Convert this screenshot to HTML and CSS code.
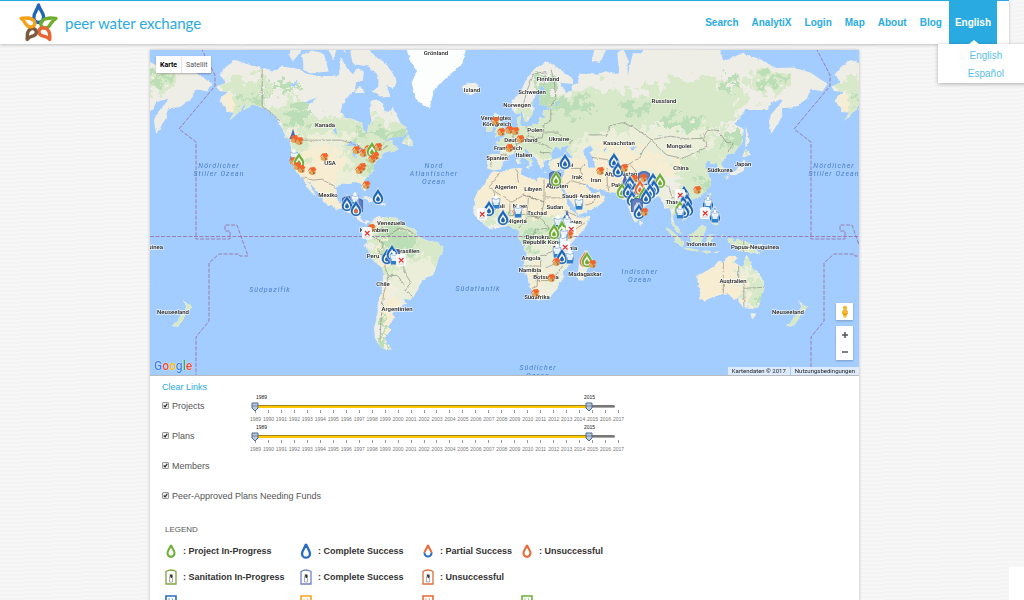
FILE: index.html
```html
<!DOCTYPE html>
<html lang="en">
<head>
<meta charset="utf-8">
<title>Peer Water Exchange</title>
<link rel="stylesheet" href="styles.css">
</head>
<body>
<svg class="sprite" aria-hidden="true">
  <defs>
    <symbol id="drop" viewBox="0 0 12 18"><path d="M6 1.2C5 5.5 1.5 8 1.5 12a4.5 4.5 0 0 0 9 0C10.5 8 7 5.500 6 1.200Z" fill="#fff" stroke="currentColor" stroke-width="2.700"/></symbol>
    <symbol id="split" viewBox="0 0 12 18"><path d="M1.500 11.500C1.800 8 5 5.500 6 1.200C7 5.500 10.200 8 10.500 11.500" fill="#fff" stroke="#e96a35" stroke-width="2.600"/><path d="M1.500 11a4.500 4.500 0 0 0 9 1V11" fill="#fff" stroke="#2a6cc0" stroke-width="2.600"/></symbol>
    <symbol id="toilet" viewBox="0 0 12 16"><path d="M1 15V2.500Q6 -.5 11 2.500V15Z" fill="#fff" stroke="currentColor" stroke-width="1.300"/><path d="M4.500 13V8Q6 4.500 7.500 8V13Z" fill="none" stroke="#999" stroke-width=".8"/><path d="M4.500 5.500h3v2.500L6 9.500Z" fill="#333"/></symbol>
    <symbol id="paper" viewBox="0 0 12 16"><path d="M1 1H11V15H1Z" fill="#fff" stroke="currentColor" stroke-width="1.600"/><path d="M4 3v4l3-1M7 3l1 3" fill="none" stroke="currentColor" stroke-width="1" opacity=".6"/></symbol>
    <symbol id="house" viewBox="0 0 10 10"><path d="M1.500 5 5 3.500 9 4.500V8L5.500 9.700 1.500 8Z" fill="#e0a45c"/><path d="M0 5.500 3 1 8 .5 10 4 5.500 6.200 3.500 3Z" fill="#f2652a"/><path d="M6.500 6.500V9l1.200-.6V6.200Z" fill="#8a4b26"/></symbol>
    <symbol id="marker" viewBox="0 0 14 19"><path d="M7 .5C6 5 1 8 1 12.500a6 6 0 0 0 12 0C13 8 8 5 7 .5Z" fill="currentColor" stroke="#fff" stroke-width=".7"/><path d="M7 6C6.500 8.500 3.500 10 3.500 12.800a3.500 3.500 0 0 0 7 0C10.500 10 7.500 8.500 7 6Z" fill="#fff"/><path d="M7 9C6.500 10.800 4.900 11.700 4.900 13.300a2.100 2.100 0 0 0 4.200 0C9.100 11.700 7.500 10.800 7 9Z" fill="currentColor"/></symbol>
    <symbol id="cup" viewBox="0 0 10 14"><path d="M1 3.500 9 3.500 8 13.500H2Z" fill="#fff" stroke="#fff"/><path d="M1.500 7.500H8.500L8 13H2Z" fill="#2b7fcb"/><path d="M2.500 5.500H7.500V10H2.500Z" fill="#e4effa"/><path d="M1 3.500Q5 5 9 3.500M1 3.500 2 13.500H8L9 3.500" fill="none" stroke="#5c8fc4" stroke-width=".7"/><circle cx="5" cy="2" r="1.700" fill="#fff"/></symbol>
    <symbol id="fail" viewBox="0 0 10 12"><rect width="10" height="12" rx="2" fill="#fff" opacity=".92"/><path d="M3 4 7.500 8.500M7.500 4 3 8.500" stroke="#e3342f" stroke-width="1.200"/><path d="M2 10h6" stroke="#ccc"/></symbol>
    <symbol id="frame" viewBox="0 0 12 14"><path d="M1 13V3Q6-1 11 3V13Z" fill="#6780bd" stroke="#4862a8"/><path d="M6 4C5 7 3 8 3 10a3 3 0 0 0 6 0C9 8 7 7 6 4Z" fill="#fff" opacity=".7"/></symbol>
    <symbol id="spike" viewBox="0 0 8 11"><path d="M4 0Q5 5 8 11H0Q3 5 4 0Z" fill="#5069b0"/></symbol>
  </defs>
</svg>

<header class="header">
  <a class="brand" href="#">
    <svg class="brand-mark" viewBox="0 0 40 40" fill="none" stroke-width="3.300" stroke-linejoin="round" aria-hidden="true">
      <path d="M20 3C19 8 15.500 10 15.500 15a4.500 4.500 0 0 0 4.500 5C24 20 25 17 25 14C24.500 10 21 7 20 3Z" stroke="#1f66b6"/>
      <path d="M37 16C32 15.500 28 15 24 18Q21 21 23 24Q27 27 30 24C32.500 21 33 18 37 16Z" stroke="#6cae2b"/>
      <path d="M31 36.500C31 32 31.500 28 27 25.500Q22 24 20.500 28Q20 32 24 33C27 34 29 34 31 36.500Z" stroke="#ea6430"/>
      <path d="M9 36.500C9 32 8.500 28 13 26Q17 25 18 29Q18 32 15 33C12 34 11 34 9 36.500Z" stroke="#7d5a3e"/>
      <path d="M3 16C8 15.500 12 14.500 15.500 18Q18 22 14 24Q10 25 8 22C6.500 20 6 18 3 16Z" stroke="#f6a11a"/>
    </svg>
    <span>peer water exchange</span>
  </a>
  <nav class="nav">
    <a href="#">Search</a>
    <a href="#">AnalytiX</a>
    <a href="#">Login</a>
    <a href="#">Map</a>
    <a href="#">About</a>
    <a href="#">Blog</a>
    <div class="nav-lang">
      <a class="active" href="#">English</a>
      <div class="menu">
        <a href="#">English</a>
        <a href="#">Español</a>
      </div>
    </div>
  </nav>
</header>

<main class="panel">
  <div class="map">
    <svg class="map-canvas" viewBox="150 50 709 325" role="img" aria-label="World map of projects">
      <defs>
        <filter id="coast" x="0" y="0" width="100%" height="100%"><feTurbulence type="fractalNoise" baseFrequency=".25" numOctaves="2" seed="4"/><feDisplacementMap in="SourceGraphic" scale="3" xChannelSelector="R" yChannelSelector="G"/></filter>
        <filter id="cover" x="-20%" y="-20%" width="140%" height="140%"><feTurbulence type="fractalNoise" baseFrequency=".12" numOctaves="4" seed="9"/><feDisplacementMap in="SourceGraphic" scale="34" xChannelSelector="R" yChannelSelector="G"/><feGaussianBlur stdDeviation=".6"/></filter>
        <clipPath id="landclip"><path id="clip-shape"/></clipPath>
        <g id="world">
          <path id="land" fill="#efeee6"/>
          <g clip-path="url(#landclip)"><g id="regions" filter="url(#cover)"></g></g>
          <path id="ice" fill="#fcfdfd"/>
          <path id="lakes" fill="#a3ccff"/>
          <path id="borders" fill="none" stroke="#80807a" stroke-width=".6"/>
        </g>
        <g id="dateline" fill="none" stroke="#9a76a5" stroke-width=".9" stroke-dasharray="4 1.500">
          <path d="M201 48 215 75V86L179 129 196 142V239H230V231H225V225H237L248 256H240L239 254H219L209 263V321L196 337V376"/>
        </g>
      </defs>
      <rect x="150" y="50" width="709" height="325" fill="#a3ccff"/>
      <g filter="url(#coast)">
        <use href="#world"/><use href="#world" x="615"/><use href="#world" x="-615"/>
      </g>
      <use href="#dateline"/><use href="#dateline" x="615"/>
      <path d="M150 236.500H859" stroke="#9a76a5" stroke-width=".9" stroke-dasharray="4 1.500"/>
      <g class="place" id="places"></g>
      <g class="ocean" id="oceans"></g>
      <g id="markers"></g>
    </svg>
    <div class="map-type"><button type="button" class="on">Karte</button><button type="button">Satellit</button></div>
    <div class="map-tools">
      <button type="button" class="pegman" aria-label="Street View"><svg viewBox="0 0 10 14"><circle cx="5" cy="3" r="2.300" fill="#f9b72a"/><path d="M2 6H8L8.500 10H7L6.600 13.500H3.400L3 10H1.500Z" fill="#f9b72a"/><path d="M3 5.500H7M3 10H7" stroke="#c98208" stroke-width=".8"/></svg></button>
      <div class="zoom">
        <button type="button" aria-label="Zoom in"><svg viewBox="0 0 8 8"><path d="M4 1V7M1 4H7" stroke="#555" stroke-width="1.500"/></svg></button>
        <button type="button" aria-label="Zoom out"><svg viewBox="0 0 8 8"><path d="M1 4H7" stroke="#555" stroke-width="1.500"/></svg></button>
      </div>
    </div>
    <div class="google" aria-label="Google"><span class="b">G</span><span class="r">o</span><span class="y">o</span><span class="b">g</span><span class="g">l</span><span class="r">e</span></div>
    <div class="credits"><span>Kartendaten © 2017</span><a href="#">Nutzungsbedingungen</a></div>
  </div>

  <form class="filters">
    <a class="clear" href="#">Clear Links</a>
    <div class="row"><label><input type="checkbox" checked> Projects</label><div class="range" data-name="Projects"></div></div>
    <div class="row"><label><input type="checkbox" checked> Plans</label><div class="range" data-name="Plans"></div></div>
    <div class="row"><label><input type="checkbox" checked> Members</label></div>
    <div class="row"><label><input type="checkbox" checked> Peer-Approved Plans Needing Funds</label></div>
  </form>

  <section class="legend">
    <h2>LEGEND</h2>
    <div class="keys">
      <div class="green"><svg><use href="#drop"/></svg>: Project In-Progress</div>
      <div class="blue big"><svg><use href="#drop"/></svg>: Complete Success</div>
      <div><svg><use href="#split"/></svg>: Partial Success</div>
      <div class="orange"><svg><use href="#drop"/></svg>: Unsuccessful</div>
      <div class="olive big"><svg><use href="#toilet"/></svg>: Sanitation In-Progress</div>
      <div class="violet big"><svg><use href="#toilet"/></svg>: Complete Success</div>
      <div class="rust big"><svg><use href="#toilet"/></svg>: Unsuccessful</div>
      <div></div>
      <div class="blue big"><svg><use href="#paper"/></svg></div>
      <div class="amber big"><svg><use href="#paper"/></svg></div>
      <div class="orange big"><svg><use href="#paper"/></svg></div>
      <div class="green big"><svg><use href="#paper"/></svg></div>
    </div>
  </section>
</main>
<div class="corner"></div>
<script src="map.js"></script>
</body>
</html>
```
FILE: styles.css
```css
* { box-sizing: border-box; }
body {
  margin: 0;
  height: 100vh;
  overflow: hidden;
  padding-right: 15px;
  font-family: "Liberation Sans", Arial, sans-serif;
  font-size: 9px;
  color: #555;
  background: repeating-linear-gradient(178deg, #f7f7f7 0 2px, #f4f4f4 2px 4px);
}
a { color: #29abe2; text-decoration: none; }
button { border: 0; padding: 0; background: #fff; font: inherit; display: grid; place-items: center; }
.sprite { position: absolute; width: 0; height: 0; }

.header {
  position: relative;
  z-index: 2;
  display: flex;
  justify-content: space-between;
  height: 44px;
  padding: 0 12px 0 18px;
  background: #fff;
  border-top: 1px solid #29abe2;
  box-shadow: 0 1px 3px rgba(0, 0, 0, .22);
}
.brand { display: flex; align-items: center; gap: 6px; font: 15px Lato, sans-serif; }
.brand-mark { width: 41px; height: 41px; }
.nav { display: flex; gap: 1px; font-size: 10px; font-weight: bold; }
.nav > a, .nav .active { display: flex; align-items: center; height: 43px; padding: 0 6px; }
.nav-lang { position: relative; }
.nav .active { background: #29abe2; color: #fff; }
.menu {
  position: absolute;
  top: 43px;
  left: -11px;
  width: 96px;
  padding: 3px 0 0;
  background: #fff;
  box-shadow: 0 1px 4px rgba(0, 0, 0, .3);
  font-weight: normal;
  text-align: center;
  line-height: 18px;
}
.menu a { display: block; color: #5bbfe8; }
.menu::before {
  content: "";
  position: absolute;
  left: 31px;
  top: -4px;
  border: 5px solid transparent;
  border-top: 0;
  border-bottom: 4px solid #fff;
}

.panel {
  max-width: 709px;
  min-height: calc(100vh - 50px);
  margin: 6px auto 0;
  background: #fff;
  box-shadow: 0 0 3px rgba(0, 0, 0, .25);
}
.map { position: relative; border-bottom: 1px solid #b9bcc2; font-family: Roboto, sans-serif; }
.map-canvas { display: block; width: 100%; height: auto; }
.place { font-size: 6px; font-weight: 500; fill: #222; stroke: #fff; stroke-width: 1.5px; stroke-opacity: .7; paint-order: stroke; text-anchor: middle; }
.ocean { font-size: 7px; font-style: italic; letter-spacing: 1px; fill: #4c80c6; text-anchor: middle; }
.map-type {
  position: absolute;
  left: 6px;
  top: 6px;
  display: flex;
  height: 17px;
  background: #fff;
  box-shadow: 0 1px 2px rgba(0, 0, 0, .3);
  border-radius: 1px;
  font-size: 7px;
}
.map-type button { padding: 0 4px; color: #555; }
.map-type .on { color: #000; font-weight: bold; border-right: 1px solid #e6e6e6; }
.map-tools { position: absolute; right: 6px; bottom: 15px; width: 17px; display: grid; gap: 6px; }
.map-tools button { width: 17px; height: 17px; box-shadow: 0 1px 2px rgba(0, 0, 0, .25); }
.pegman svg { width: 10px; height: 13px; }
.zoom svg { width: 8px; height: 8px; }
.google { position: absolute; left: 4px; bottom: 1px; font: 500 12px/16px Roboto, sans-serif; }
.google span { text-shadow: 0 0 1px #fff, 0 0 1px #fff; }
.google .b { color: #3b7ded; }
.google .r { color: #e8453c; }
.google .y { color: #f5b400; }
.google .g { color: #35a853; }
.credits { position: absolute; right: 0; bottom: 0; display: flex; gap: 1px; font-size: 6px; line-height: 8px; }
.credits > * { padding: 0 4px; background: rgba(240, 245, 252, .75); color: #222; }

.filters { padding: 5px 12px 0; }
.clear { display: block; height: 19px; line-height: 12px; }
.row { display: flex; height: 30px; }
label { display: flex; align-items: center; gap: 3px; height: 11px; min-width: 87px; white-space: nowrap; }
input[type="checkbox"] {
  appearance: none;
  width: 7px;
  height: 7px;
  margin: 0;
  border: 1px solid #999;
  border-radius: 1px;
  background: #eee;
}
input[type="checkbox"]:checked {
  background: url("data:image/svg+xml,%3Csvg xmlns='http://www.w3.org/2000/svg' viewBox='0 0 7 7'%3E%3Cpath d='M1 3.500 3 5.500 6 1' fill='none' stroke='%23222' stroke-width='1.600'/%3E%3C/svg%3E") #eee;
}
.range { position: relative; width: 376px; height: 25px; margin-top: -6px; }
.values { display: flex; justify-content: space-between; width: 339px; margin-left: 7px; font-size: 5px; line-height: 6px; color: #222; padding-bottom: 5px; }
.bar { height: 3px; margin: 0 10px 2px 4px; border-radius: 2px; background: linear-gradient(#777 50%, #aaa 50%); }
.fill { width: 92%; height: 3px; background: linear-gradient(#a08420 34%, #ffc800 34%); }
.range input {
  position: absolute;
  left: 1px;
  top: 8px;
  width: 370px;
  height: 10px;
  margin: 0;
  appearance: none;
  background: none;
  pointer-events: none;
}
.range input::-webkit-slider-thumb {
  appearance: none;
  width: 10px;
  height: 10px;
  background: url("data:image/svg+xml,%3Csvg xmlns='http://www.w3.org/2000/svg' viewBox='0 0 10 10'%3E%3Cpath d='M2 1H8V6L5 9 2 6Z' fill='%23b9cbdd' stroke='%2350688a'/%3E%3Cpath d='M2 4H8' stroke='%2350688a' stroke-width='.700'/%3E%3C/svg%3E");
  pointer-events: auto;
}
.years { display: grid; grid-template-columns: repeat(29, 1fr); font-size: 5px; line-height: 6px; color: #777; text-align: center; }
.years span::before { content: ""; display: block; width: 1px; height: 3px; margin: 0 auto 3px; background: #999; }

.legend { padding: 5px 15px 0; }
h2 { margin: 0 0 5px; font-size: 8px; line-height: 10px; font-weight: normal; }
.keys { display: grid; grid-template-columns: 135px 122px 99px 1fr; grid-auto-rows: 26px; font-weight: bold; }
.keys > div { display: flex; align-items: center; gap: 6px; height: 21px; white-space: nowrap; -webkit-text-fill-color: #333; }
.keys svg { width: 12px; height: 14px; }
.keys .big svg { height: 16px; }
.green { color: #6eb03a; }
.blue { color: #2a6cc0; }
.orange { color: #e96a35; }
.olive { color: #7fa43c; }
.violet { color: #6f82c8; }
.rust { color: #d9703c; }
.amber { color: #f5a21c; }
.corner { position: fixed; right: 0; bottom: 0; width: 15px; height: 33px; background: #fff; }
```
FILE: map.js
```js
// Coastlines as "lon,lat" lists, drawn in a Mercator projection.
const SCALE = 97.9;
const project = (lon, lat) => {
  const y = Math.log(Math.tan(Math.PI / 4 + lat * Math.PI / 360));
  return [(503 + lon * 1.708).toFixed(1), (236.5 - SCALE * y).toFixed(1)];
};
const trace = (text, close) => 'M' + text.trim().split(/\s+/).map(p => project(...p.split(',').map(Number)).join(' ')).join('L') + (close ? 'Z' : '');
const shape = (list, close = true) => list.map(t => trace(t, close)).join('');
const by = id => document.getElementById(id);

const land = [
  '-168,65.6 -162,66.5 -166,68.3 -162,70 -156.5,71.3 -150,70.5 -141,69.7 -135,69 -130,70 -125,69.8 -120,69.5 -115,68.5 -108,68 -101,68 -96,68.2 -95,71.8 -91,69.5 -88,68.5 -85,69.7 -81.5,69 -82,67 -86,66.3 -87,64.5 -92,62.5 -94.5,60 -94.5,58.8 -92.5,57 -88,56.5 -82.3,55.1 -82,53 -79.5,51.4 -79,54 -76.8,56 -78,58.5 -77.5,62 -73.5,62.3 -70,61 -69.5,59 -66,58.7 -64.5,60.3 -62,57.5 -60,55.2 -56,53 -55.8,52 -59,50.2 -66,50.1 -71,47 -68,48.5 -65,49.2 -64.5,47 -61,45.6 -65.5,43.6 -66,45 -70,43.7 -70.7,42 -74,40.6 -75.5,38 -76,35.2 -79,33.5 -81.3,31 -80.2,27 -80.5,25.2 -82,27 -83,29.5 -86,30.3 -90,29.3 -94,29.6 -97.2,27.7 -97.7,23 -96,19 -92,18.6 -90.5,21 -87,21.4 -88,18.5 -88.5,15.9 -84,15.8 -83.3,14 -83.7,11 -82,9 -79.5,9.6 -77.5,8.5 -78.5,8.3 -80,7.5 -83,8.3 -85.7,10 -87.5,13 -91.5,14 -94.5,16.2 -98,16.2 -102,18 -105.5,20 -105.5,22.5 -109,25.7 -112.5,29.5 -114.8,31.7 -112.5,28 -109.5,23 -112,25 -115,28 -117,32.5 -120.5,34.5 -122.5,37.5 -124.3,40.3 -124,46 -124.7,48.4 -123,49 -127.5,51 -130.5,54.5 -133.5,57.5 -139.5,59.7 -146,60.8 -149,60 -152,59.2 -151,61.3 -154,59 -158,57 -163,54.8 -160,56.2 -157.5,58.5 -162,58.7 -162,60 -166,61.7 -164.5,63 -161,64.3 -166,64.5',
  '-90,73.8 -80,73.7 -75,72 -68,70.5 -62,67 -64,65 -68,66 -66,63 -71,62.8 -77,64.5 -73,65.5 -73,68 -79,70 -88,70.5',
  '-117,71 -117,69.5 -113,68.6 -102,69 -105,72.5 -112,73 -118,72.3', '-125,72 -123,71 -118,73 -124,74', '-87,64 -81,64 -84,66', '-102,73 -99,71.3 -97,73.8 -92,72.5 -92,74 -102,74',
  '-59.3,47.7 -53,46.7 -53,48.5 -56,51.5', '-84.8,22 -80,23 -75,20.7 -74.2,20 -77.5,19.9 -82,22.4', '-74,18.3 -73,19.9 -68.5,18.6 -71,17.9', '-128,50.7 -123.5,48.3 -125,50',
  '-24,65.5 -22,66.3 -16,66.5 -13.6,65 -18.5,63.4 -22.5,63.9',
  '-77.5,8.5 -75.5,10.7 -72,12 -71.5,10.8 -68,11.5 -62,10.7 -60,8.5 -57,6 -51.5,4.3 -50,0 -44,-2.5 -39,-3.5 -35.2,-5.5 -35,-8.5 -37.5,-12 -39,-17 -41,-22 -46,-24 -48.7,-27 -52,-33 -54,-34.7 -58,-34.2 -57,-36.5 -62,-39 -65,-41 -63.7,-42.5 -65.5,-45 -67.5,-46.2 -65.8,-47.8 -69,-51 -68.5,-52.5 -65.2,-54.8 -69,-55.3 -72,-54 -75,-51 -75.5,-47 -73.5,-42 -73.5,-37 -71.5,-32 -70.3,-25 -70.3,-18.3 -76,-14 -79,-8 -81.3,-5 -80,-3 -80.8,-1 -78.8,1.5 -77.3,4 -77.8,7',
  '-6,35.8 -2,35.2 5,36.8 11,37.2 10.2,34.2 15,32.3 20,30.9 20,32.5 23,32.5 29,31 34,31.2 32.6,29.8 35.5,24 37.3,21 37.5,18.6 39.5,15.5 43.2,12.4 43.5,11.3 51.2,11.8 48,5 42.5,-1 39.3,-5 40.6,-11 40.5,-15 35,-20 35.4,-24 32.7,-26 32,-29 28,-33 25.5,-34 20,-34.8 18.4,-34 18.2,-32 15,-27 14.4,-22.5 11.8,-17 13.8,-11 12.3,-6 9,-1 9.5,4 6,4.3 3.5,6.4 -3,5 -7.5,4.4 -13,8.5 -16.8,12.5 -17.4,14.7 -16.3,19 -17,21 -14.5,26 -10,29.5 -9.7,31.5',
  '49.3,-12 50.4,-15.5 47.2,-25 44.2,-25 43.5,-22 44.5,-16.2',
  '-9,37 -9.3,39 -8.8,43.2 -1.8,43.4 -1.2,46 -4.7,48.4 -1.5,48.7 -1.5,49.7 1.6,50.9 4,52 5,53.3 8.5,53.8 8.1,56.8 10.6,57.7 10,55 12,54.2 14,53.9 18.5,54.8 21,55.3 21.2,57 24,57 23.5,59.2 30,59.9 25,60.2 21.5,61 21.3,63 25.3,65 22,65.8 17.5,62 17,60.8 18.5,60 16.5,57 14,55.5 12.8,55.5 11,59 8,58 5.5,59 5,62 10,64 14.5,68 20,70 26,71 31,70 41,67.5 41,66.2 33.5,66.5 37,64 40.5,64.7 40,66 44,66.3 44,68.5 54,68.5 61,69 68,68.5 67,72.5 70,73.5 73,71.5 73,68 76,72.5 81,72.5 87,75 98,76 113,74 113.5,73.5 127,73.3 129,71 140,72.5 150,71.5 160,69.7 170,69.8 180,68.8 190,66.2 187,64.4 180,65 178,62.5 170.5,60 164,59.9 162.5,56.5 157,51.2 155.7,56 157,58 163,61.5 164,62.5 157,61.5 155,59.3 142,59.3 135.5,54.8 141,53 140.3,48.5 135.5,44 131,43 130,41 127.5,39.5 129.4,37 129,35.2 126.5,34.5 126,37.5 124.8,39.6 121.5,39 121.5,40.8 118,39 119,37.2 122.3,37 119.5,35 121.8,31.5 121.5,28.5 119,25.5 114.5,22.4 110,21 108,21.6 106,19 109,13 108,11 105,8.7 105,10.5 102.5,12.2 101,13.4 99.5,11 100.5,7 103.4,4 104,1.4 101.3,3 100.3,6 98.3,8 98.6,13 97.5,16.5 94.3,16 94,19 91.8,22.5 88,21.7 86.5,20 82.3,16.5 80.2,15 80,12 79.8,10.3 77.5,8 76.3,10 74.5,14 72.8,19 72.6,21.3 70,21 69,22.5 67,24.8 61.5,25.2 57,26.8 54,26.6 51,28 48.5,30 48,29.5 50.2,26.6 51.5,25 51.8,24 54,24.2 56.3,26 57,24 59.8,22.5 57.7,19 55,17.2 52,15.7 45,12.8 43.3,12.8 42.5,16.5 39,21.2 35,28 34.5,29.5 34.3,31.3 36,35 36,36.7 32,36.2 27.5,36.8 26.5,39 29,41 35,42 41.5,41.6 37,45 39,47.2 35,46.3 34,44.5 32.5,45.5 33,46.2 30.5,46.3 28,43.5 28.5,41.3 26,40.8 23.5,40.5 24,38 22.5,36.6 21,38.5 19.5,41.5 15,44.3 13.6,45.5 12.3,45.3 14,42.3 18.5,40.2 16.8,40.4 16.5,38.2 15.7,38 15.5,40 12,42 8.8,44.4 5,43.3 3.2,42.8 3,41.9 0,40 -0.5,38 -2,36.7 -5.5,36',
  '-5.5,50.1 1.4,51.2 1.5,52.8 -1.5,55 -2,57.6 -5,58.6 -5.8,56 -3,54 -4.5,52.8 -5,51.8 -3,51.3', '-10,52 -6.3,52.3 -6,55 -9.5,54', '12.5,38 15.5,38.2 15,36.8', '8.3,39 9.7,39.3 9.5,43 8.3,41', '24,35.4 26,35.1 24,35', '32.5,35 34.5,35.6 33,34.6',
  '52,71 57,70.7 60,73 68,76.5 55,75', '142,54 144.5,49 142,46', '140,42 141.8,45.4 145.3,43.3 141,42', '141,41.3 142,39.5 140.8,35.7 136,33.7 131,34 136,35.8 139.5,38.5', '130,33.5 132,33.5 131,31.2', '120.2,23 121.8,25.2 121,22', '108.7,19.5 111,20 109.5,18.3',
  '120.5,18.5 122,18.3 121.6,14 124,12.7 120.2,14', '122,7.5 125.5,9.8 126.3,6.5 125,6', '123,11 125,12 125,10.3', '80,9.5 81.8,7.5 80.5,6 79.8,7',
  '95.3,5.6 98,4 103.5,-1 106,-3 105.8,-5.8 102,-4 98.5,1', '105.3,-6.6 108,-6.7 114.5,-7.8 114,-8.7 108,-7.8', '109,1.5 111,1.5 116.5,7 119,5 117.5,1 116,-4 110.2,-2.9', '120,0.8 125,1.5 120.5,0.3 123,-1 121.5,-2 122.5,-5 120.5,-3 120.3,-5.5 119,-3', '116,-8.5 120,-8.3 122,-8.5 119,-9.8', '124,-10 127,-8.5 124,-9.2', '128,0 129,1.5 128.5,-1',
  '131,-0.8 134,-0.8 135,-3.3 138,-1.7 144.5,-3.8 148,-6 147,-6.8 150.8,-10.4 147,-9.5 143,-9 138,-8.3 138,-5.8 133,-4 132,-2.8', '148.5,-5.5 152,-4 151,-6',
  '114,-22 114,-26 115.7,-32 115,-34.3 118,-35 124,-33 129,-31.7 131.5,-31.5 135.5,-34.8 137.8,-32.7 138,-35.5 140,-38 143.5,-38.8 146.3,-39 150,-37.5 151.2,-33.5 153.3,-28.5 152.5,-25 149,-20.5 146,-18.8 145.2,-15 142.5,-10.8 141.5,-13.5 140.8,-17.5 139,-17.3 135.5,-15 136.8,-12.2 132.5,-11.2 130.7,-12.6 129.5,-15 126.5,-14 123.7,-17 122,-18.2 118.5,-20.3',
  '144.7,-40.8 148.3,-41 147,-43.5 145.5,-42.5', '172.8,-34.5 175.5,-36.8 178.5,-37.7 177,-39.5 175.3,-41.6 173.8,-39.3 174.7,-38', '172.7,-40.6 174.2,-41.5 172.8,-43.8 170.7,-45.8 168.5,-46.6 166.5,-46 170,-43.2'
];
const ice = ['-66,78 -60,76 -54,71 -50.5,69 -53.5,66.5 -51,62.5 -46,60.3 -43,60 -40,65 -32,68 -24,70.5 -20,75 -20,80 -66,80'];
const lakes = ['47,45 51,47 53,45 50.5,44 53,41.5 54,37.3 50,37.5 49.5,40.5 47.5,43', '-92,46.8 -88,48.7 -84.5,46.5', '-87.5,45.5 -86,45.5 -86.5,41.8 -88,42', '-84,46 -80,45 -82.5,43', '-83,41.6 -79,43 -81,42', '-79.5,43.5 -76.5,44 -79,43.2', '32,0 34,0 33,-2.5', '104,51.5 109.5,55.5 105,52', '58.5,45 61,46.5 60,44', '-125,66 -120,67 -122,65.5', '-116,61.5 -109,62.8 -113,61', '-99,52 -97,51 -98,54', '30,61 33,61.5 31,60', '74,46 79,46.5 75,45'];
const borders = [
  '-123,49 -95,49 -89,48 -83,46 -79,43.3 -75,45 -71,45.2 -67,47', '-141,69.7 -141,60.3 -137,59 -130,55.5', '-117,32.5 -111,31.3 -106,31.8 -101,29.5 -97.2,26',
  '50,51 55,51 61,51 62,54 70,55.3 77,53.5 87,49.2 98,50.5 107,49.5 117,49.7 120,53 126,52.5 131,48 135,48.2 131,43', '87,49.2 91,46 96,43 105,41.5 112,43.7 120,46.5 117,49.7', '87,49.2 82,45 80,42 74,39 78,35.5', '52,42 56,41.5 61,41 67,37.5 74,39', '61,37 61,30 62,25.3', '67,25 70,28 74,31 74,34 78,35.5', '78,35 81,30.5 88,27.8 97,28.5 99,22 105,23 108,21.6',
  '28,69.5 30,67 31,62.5 28,60.5', '12,61 14,64.5 18,68.5 25,69', '25,69 24,66', '23,54 28,56 28,59.5', '24,52 32,52 35,50 40,49 39,47.5', '14,54 15,51 19,49.5 23,50 24,54', '6,53 6,49.5 8,47.5 14,49 15,51', '8,47.5 7,44', '17,48 22,48 29,45.3', '22,44 28,44', '-7,42 -7,37.5', '-1.5,43.3 3,42.5',
  '-8,28 -5,31 -2,35', '-8,27.5 5,19.5 12,23.5 24,20 24,31.5', '9,30 8,37', '12,23.5 15,23 24,19.5', '25,22 36,22', '-12,15 -5,15.5 -5,25', '4,19 4,12 14,13', '9,4.5 15,12 22,11 27,5 19,4 17,-1 12,-5', '15,23 14,13 22,11 24,19.5', '34,4 31,4 30,-4 30,-8 24,-11 22,-11 22,-17 12,-17', '34,5 42,4 48,8', '20,-18 20,-28 17,-29', '20,-25 26,-25 31,-22 35,-17', '25,-18 30,-16 33,-10 40,-11', '36,15 43,12',
  '-77,1 -70,-4 -73,-10 -69,-11 -69,-18', '-72,7 -67,1 -60,5 -52,2', '-69,-11 -65,-10 -58,-16 -58,-20 -54,-26 -57.5,-30 -53,-33', '-69,-18 -67,-23 -70,-32 -71.5,-45 -72,-52', '-67,-22.5 -62,-22 -58,-27',
  '35,28 40,31 48,29', '37,37 45,37 47,31', '45,37 48,39', '43,16.5 52,19 56,24', '129,-15 129,-31.5', '138,-17 138,-26 141,-26 141,-38', '141,-29 153,-28.5', '129,-26 138,-26', '141,-3 141,-9'
];
by('land').setAttribute('d', shape(land));
by('clip-shape').setAttribute('d', shape(land));
by('ice').setAttribute('d', shape(ice));
by('lakes').setAttribute('d', shape(lakes));
by('borders').setAttribute('d', shape(borders, false));

// Vegetation and desert patches: colour, centre x, centre y, radius x, radius y.
const GREEN = '#d8e9c9', DEEP = '#bcdeb6', SAND = '#f6edd2', PALE = '#ebeed9', ROCK = '#efeee6';
const regions = [
  [PALE, 330, 160, 75, 40], [SAND, 318, 165, 25, 22], [SAND, 330, 200, 22, 14], [GREEN, 375, 155, 30, 26], [GREEN, 265, 108, 40, 18], [GREEN, 340, 125, 55, 9], [GREEN, 400, 130, 30, 10], [DEEP, 250, 92, 18, 8], [DEEP, 297, 116, 12, 12], [DEEP, 382, 132, 26, 4], [DEEP, 285, 86, 14, 4], [GREEN, 245, 85, 26, 10], [SAND, 225, 105, 9, 8], [GREEN, 300, 145, 8, 14], [DEEP, 375, 165, 12, 5], [ROCK, 275, 98, 14, 7],
  [GREEN, 409, 245, 42, 38], [DEEP, 395, 240, 20, 16], [PALE, 415, 280, 24, 24], [SAND, 388, 318, 10, 28], [SAND, 378, 262, 4, 26], [DEEP, 382, 335, 3, 24],
  [PALE, 545, 175, 80, 60], [SAND, 530, 190, 60, 26], [SAND, 590, 180, 40, 26], [GREEN, 535, 232, 34, 18], [DEEP, 530, 236, 16, 8], [PALE, 545, 268, 26, 24], [SAND, 536, 282, 8, 18], [SAND, 577, 222, 9, 15], [GREEN, 494, 218, 18, 5], [GREEN, 588, 270, 5, 10],
  [GREEN, 540, 135, 60, 23], [PALE, 500, 158, 22, 10], [GREEN, 600, 110, 65, 22], [DEEP, 570, 105, 20, 9], [DEEP, 543, 92, 9, 18], [GREEN, 690, 104, 50, 28], [GREEN, 768, 80, 22, 12], [DEEP, 768, 80, 12, 7], [DEEP, 727, 83, 6, 8], [DEEP, 680, 122, 26, 6], [DEEP, 635, 108, 12, 6], [GREEN, 735, 95, 14, 10],
  [PALE, 660, 145, 90, 18], [SAND, 652, 168, 30, 13], [SAND, 620, 160, 35, 14], [GREEN, 700, 175, 24, 26], [DEEP, 705, 186, 12, 7], [GREEN, 725, 145, 18, 16], [DEEP, 733, 138, 10, 8], [PALE, 640, 195, 24, 25], [GREEN, 690, 205, 20, 25], [GREEN, 700, 236, 45, 20], [GREEN, 750, 247, 24, 12],
  [SAND, 725, 278, 40, 28], [PALE, 752, 278, 14, 26], [GREEN, 756, 295, 10, 16], [GREEN, 745, 262, 6, 12], [DEEP, 758, 300, 4, 6], [GREEN, 797, 313, 12, 18]
];
by('regions').innerHTML = regions.map(([c, x, y, rx, ry]) => `<ellipse cx="${x + 1}" cy="${y + 1}" rx="${rx}" ry="${ry}" fill="${c}"/>`).join('');

const label = ([t, x, y]) => `<text x="${x}" y="${y}">${t}</text>`;
by('places').innerHTML = [
  ['Grönland', 436, 55], ['Island', 472, 92], ['Finnland', 548, 81], ['Schweden', 532, 94], ['Norwegen', 517, 107], ['Vereinigtes', 496, 120], ['Königreich', 497, 126], ['Polen', 535, 132], ['Deutschland', 521, 142], ['Ukraine', 559, 141], ['Frankreich', 508, 150], ['Italien', 524, 157], ['Spanien', 497, 160], ['Russland', 664, 103], ['Kasachstan', 619, 145], ['Mongolei', 679, 148], ['China', 681, 170], ['Südkorea', 720, 172], ['Japan', 743, 166], ['Kanada', 325, 127], ['USA', 330, 165], ['Mexiko', 328, 197], ['Algerien', 506, 189], ['Libyen', 533, 191], ['Ägypten', 557, 188], ['Türkei', 565, 167], ['Irak', 577, 179], ['Iran', 596, 182], ['Afghanistan', 621, 176], ['Pakistan', 623, 187], ['Saudi-Arabien', 581, 198], ['Mali', 499, 208], ['Niger', 520, 208], ['Sudan', 555, 209], ['Tschad', 537, 215], ['Nigeria', 517, 223], ['Äthiopien', 569, 224], ['Demokratische', 546, 239], ['Republik Kongo', 544, 244], ['Angola', 531, 260], ['Namibia', 530, 272], ['Botsuana', 546, 279], ['Südafrika', 537, 299], ['Tansania', 565, 250], ['Madagaskar', 585, 276], ['Thailand', 677, 204], ['Indonesien', 701, 246], ['Papua-Neuguinea', 755, 249], ['Australien', 733, 283], ['Neuseeland', 173, 314], ['Neuseeland', 788, 314], ['Papua-Neuguinea', 139, 249], ['Venezuela', 391, 225], ['Kolumbien', 374, 232], ['Peru', 373, 258], ['Brasilien', 408, 253], ['Chile', 383, 286], ['Argentinien', 397, 311]
].map(label).join('');
by('oceans').innerHTML = [
  ['Nördlicher', 219, 168], ['Stiller Ozean', 219, 176], ['Nördlicher', 834, 168], ['Stiller Ozean', 834, 176], ['Nord', 434, 168], ['Atlantischer', 434, 176], ['Ozean', 434, 184], ['Südpazifik', 270, 292], ['Südatlantik', 478, 291], ['Indischer', 640, 274], ['Ozean', 640, 282], ['Südlicher', 538, 370], ['Ozean', 538, 378]
].map(label).join('');

const BLUE = '#1e66b4', LEAF = '#6fae33', FIRE = '#e96a35';
const sizes = { house: [10, 9], marker: [14, 18], cup: [10, 14], fail: [10, 12], frame: [13, 15], spike: [8, 11] };
const pins = [
  ['spike', 293, 134], ['house', 294, 139], ['house', 299, 141], ['cup', 294, 156], ['house', 293, 161], ['marker', 299, 160, LEAF], ['house', 297, 166], ['house', 301, 169], ['house', 312, 171], ['house', 324, 157], ['house', 356, 150], ['house', 363, 153], ['house', 368, 149], ['marker', 372, 149, LEAF], ['house', 378, 147], ['house', 375, 156], ['house', 372, 159], ['house', 362, 167], ['house', 359, 170], ['house', 366, 185],
  ['frame', 348, 203], ['frame', 357, 205], ['cup', 355, 199], ['marker', 347, 203, BLUE], ['marker', 356, 208, BLUE], ['drip', 356, 209], ['marker', 378, 196, BLUE],
  ['house', 371, 228], ['fail', 367, 233], ['marker', 387, 256, BLUE], ['frame', 394, 256], ['marker', 392, 252, BLUE], ['cup', 394, 258], ['fail', 401, 260],
  ['house', 495, 121], ['house', 501, 132], ['house', 509, 130], ['house', 515, 131], ['house', 520, 139], ['house', 509, 148],
  ['marker', 565, 161, BLUE], ['frame', 555, 178], ['marker', 556, 178, LEAF], ['cup', 579, 203], ['house', 600, 171],
  ['cup', 496, 202], ['marker', 489, 208, BLUE], ['fail', 482, 214], ['marker', 503, 217, BLUE], ['house', 516, 212], ['cup', 518, 211],
  ['spike', 567, 215], ['cup', 558, 222], ['marker', 565, 222, BLUE], ['cup', 567, 222], ['marker', 562, 228, LEAF], ['fail', 571, 229], ['marker', 554, 231, LEAF], ['house', 569, 235], ['cup', 564, 234], ['cup', 563, 241], ['fail', 565, 247], ['cup', 557, 251], ['marker', 562, 256, BLUE], ['cup', 570, 257], ['house', 556, 262], ['house', 551, 278], ['house', 535, 293], ['marker', 585, 259, FIRE], ['marker', 587, 259, LEAF], ['house', 592, 264],
  ['marker', 614, 160, BLUE], ['marker', 618, 169, BLUE], ['house', 624, 168], ['spike', 625, 179], ['frame', 644, 178], ['house', 634, 179], ['marker', 630, 183, BLUE], ['marker', 622, 190, LEAF], ['marker', 628, 190, BLUE], ['house', 643, 178], ['marker', 653, 180, BLUE], ['marker', 660, 180, LEAF], ['marker', 635, 190, BLUE], ['marker', 654, 187, BLUE], ['marker', 650, 191, BLUE], ['marker', 640, 187, FIRE], ['marker', 644, 194, LEAF], ['marker', 646, 196, BLUE], ['marker', 632, 198, BLUE], ['marker', 636, 203, LEAF], ['frame', 637, 205], ['marker', 639, 211, BLUE], ['house', 644, 212],
  ['house', 697, 190], ['marker', 684, 193, BLUE], ['fail', 680, 195], ['marker', 687, 201, BLUE], ['marker', 683, 203, BLUE], ['marker', 688, 208, BLUE], ['marker', 680, 208, LEAF], ['marker', 684, 210, BLUE], ['cup', 680, 212], ['marker', 708, 202, BLUE], ['cup', 708, 203], ['fail', 705, 213], ['marker', 715, 215, BLUE], ['cup', 715, 216]
];
by('markers').innerHTML = pins.map(([k, x, y, c]) => {
  if (k === 'drip') return `<circle cx="${x}" cy="${y + 2}" r="2" fill="${FIRE}"/>`;
  const [w, h] = sizes[k];
  return `<use href="#${k}" x="${x - w / 2}" y="${y - h / 2}" width="${w}" height="${h}" color="${c || BLUE}"/>`;
}).join('');

document.querySelectorAll('.range').forEach(el => {
  const years = Array.from({ length: 29 }, (_, i) => `<span>${1989 + i}</span>`).join('');
  const knob = (value, end) => `<input type="range" min="1989" max="2017" value="${value}" aria-label="${el.dataset.name} ${end} year">`;
  el.innerHTML = `<div class="values"><span>1989</span><span>2015</span></div><div class="bar"><div class="fill"></div></div><div class="years">${years}</div>${knob(1989, 'first')}${knob(2015, 'last')}`;
});
```
